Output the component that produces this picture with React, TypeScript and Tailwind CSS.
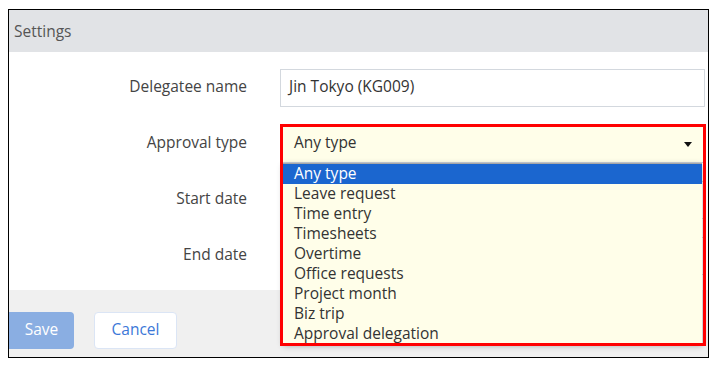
import React from "react";

const font = { fontFamily: '"Open Sans", "Liberation Sans", sans-serif' };

const options = [
  "Any type",
  "Leave request",
  "Time entry",
  "Timesheets",
  "Overtime",
  "Office requests",
  "Project month",
  "Biz trip",
  "Approval delegation",
];

function Row({ label, children }: { label: string; children?: React.ReactNode }) {
  return (
    <div className="flex items-center h-[38px]">
      <div className="w-[238px] text-right text-[15.5px] text-[#444] pb-[2px]">{label}</div>
      <div className="ml-[33px] w-[425px] h-[38px] relative">{children}</div>
    </div>
  );
}

export default function App() {
  return (
    <div className="w-[713px] h-[366px] bg-white pl-[8px] pt-[9px]" style={font}>
      <div className="w-[701px] h-[349px] border border-black flex flex-col">
        <div className="h-[42px] bg-[#e1e3e6] flex items-center pl-[5px] pt-[1px] text-[15.5px] text-[#555]">
          Settings
        </div>
        <div className="h-[238px] bg-white pt-[17px] flex flex-col gap-[18px]">
          <Row label="Delegatee name">
            <div className="h-full w-full border border-[#d3d8de] bg-white flex items-center pl-[8px] pb-[2px] text-[15.5px] text-[#333]">
              Jin Tokyo (KG009)
            </div>
          </Row>
          <Row label="Approval type">
            <div className="h-full w-full border border-[#c9ced6] bg-[#fffee9] flex items-center pl-[13px] pr-[12px] text-[15.5px] text-[#333]">
              <span className="flex-1 pb-[2px]">Any type</span>
              <svg width="8" height="5" viewBox="0 0 8 5">
                <path d="M0 0 L8 0 L4 5 Z" fill="#111" />
              </svg>
            </div>
            <div className="absolute top-[38px] left-[3px] w-[419px] z-10 bg-[#fffee9] border-t border-[#a8a8a8] shadow-[0_2px_6px_rgba(0,0,0,0.3)]">
              {options.map((o, i) => (
                <div
                  key={o}
                  className={
                    "h-[20px] flex items-center pl-[11px] pb-[1px] text-[15.5px] leading-none " +
                    (i === 0 ? "bg-[#1b66cf] text-white" : "text-[#333]")
                  }
                >
                  {o}
                </div>
              ))}
            </div>
            <div className="absolute -top-[1px] left-0 w-[426px] h-[222px] border-[3px] border-[#ff0000] z-20 pointer-events-none" />
          </Row>
          <Row label="Start date">
            <div className="h-full w-full border border-[#d3d8de] bg-white" />
          </Row>
          <Row label="End date">
            <div className="h-full w-full border border-[#d3d8de] bg-white" />
          </Row>
        </div>
        <div className="h-[67px] bg-[#f0f0f0] pt-[22px] flex items-start gap-[20px]">
          <div className="w-[65px] h-[37px] bg-[#8aaee2] rounded-r-[4px] flex items-center justify-center pb-[1px] text-[15.5px] text-white">
            Save
          </div>
          <div className="w-[83px] h-[37px] bg-white border border-[#dbe5f5] rounded-[4px] flex items-center justify-center pb-[1px] text-[15.5px] text-[#3c78d8]">
            Cancel
          </div>
        </div>
      </div>
    </div>
  );
}
